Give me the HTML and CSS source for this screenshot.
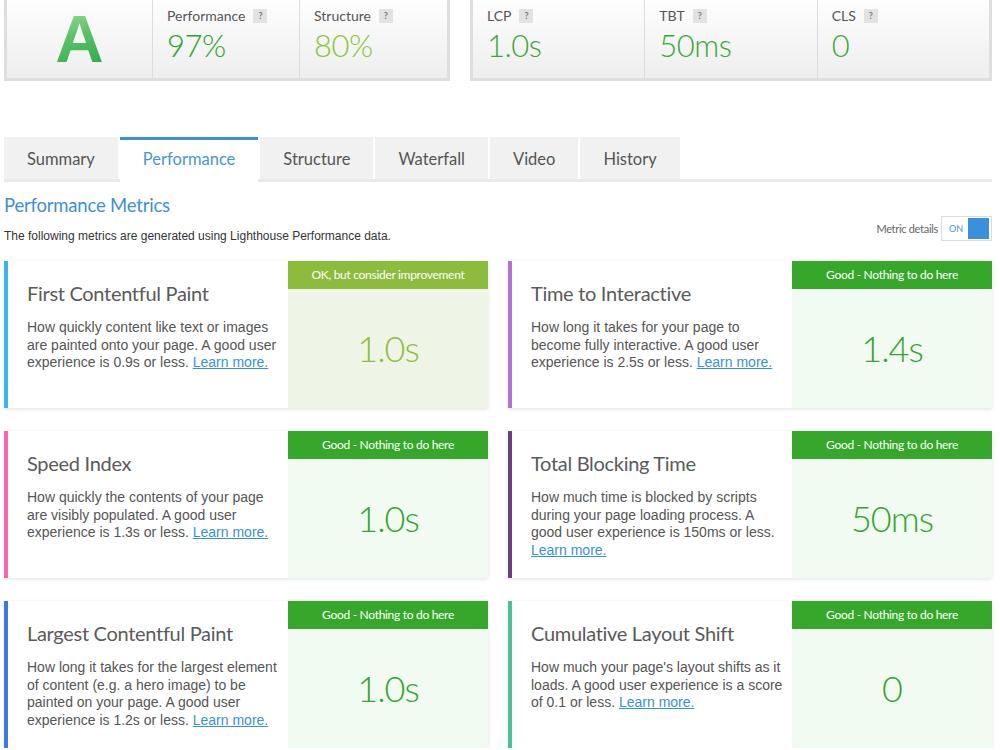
FILE: index.html
```html
<!DOCTYPE html>
<html lang="en">
<head>
<meta charset="utf-8">
<title>Performance Report</title>
<link rel="stylesheet" href="styles.css">
</head>
<body>
<div class="page">
  <div class="scores">
    <div class="panel panel-left">
      <div class="cell cell-grade"><span class="grade">A</span></div>
      <div class="cell">
        <div class="label">Performance <span class="q">?</span></div>
        <div class="value v-dark">97%</div>
      </div>
      <div class="cell">
        <div class="label">Structure <span class="q">?</span></div>
        <div class="value v-light">80%</div>
      </div>
    </div>
    <div class="panel panel-right">
      <div class="cell">
        <div class="label">LCP <span class="q">?</span></div>
        <div class="value v-green">1.0s</div>
      </div>
      <div class="cell">
        <div class="label">TBT <span class="q">?</span></div>
        <div class="value v-green">50ms</div>
      </div>
      <div class="cell">
        <div class="label">CLS <span class="q">?</span></div>
        <div class="value v-green">0</div>
      </div>
    </div>
  </div>

  <nav class="tabs">
    <div class="tab">Summary</div>
    <div class="tab active">Performance</div>
    <div class="tab">Structure</div>
    <div class="tab">Waterfall</div>
    <div class="tab">Video</div>
    <div class="tab">History</div>
  </nav>

  <h2 class="section-title">Performance Metrics</h2>
  <div class="intro-row">
    <p class="intro">The following metrics are generated using Lighthouse Performance data.</p>
    <div class="toggle-wrap">
      <span class="toggle-label">Metric details</span>
      <span class="toggle"><span class="toggle-on">ON</span><span class="toggle-knob"></span></span>
    </div>
  </div>

  <div class="metrics">
    <div class="card c-fcp">
      <div class="card-body">
        <h3 class="card-title">First Contentful Paint</h3>
        <p class="card-desc">How quickly content like text or images are painted onto your page. A good user experience is 0.9s or less. <a href="#">Learn more.</a></p>
      </div>
      <div class="card-score ok">
        <div class="score-head">OK, but consider improvement</div>
        <div class="score-val">1.0s</div>
      </div>
    </div>

    <div class="card c-tti">
      <div class="card-body">
        <h3 class="card-title">Time to Interactive</h3>
        <p class="card-desc">How long it takes for your page to become fully interactive. A good user experience is 2.5s or less. <a href="#">Learn more.</a></p>
      </div>
      <div class="card-score good">
        <div class="score-head">Good - Nothing to do here</div>
        <div class="score-val">1.4s</div>
      </div>
    </div>

    <div class="card c-si">
      <div class="card-body">
        <h3 class="card-title">Speed Index</h3>
        <p class="card-desc">How quickly the contents of your page are visibly populated. A good user experience is 1.3s or less. <a href="#">Learn more.</a></p>
      </div>
      <div class="card-score good">
        <div class="score-head">Good - Nothing to do here</div>
        <div class="score-val">1.0s</div>
      </div>
    </div>

    <div class="card c-tbt">
      <div class="card-body">
        <h3 class="card-title">Total Blocking Time</h3>
        <p class="card-desc">How much time is blocked by scripts during your page loading process. A good user experience is 150ms or less. <a href="#">Learn more.</a></p>
      </div>
      <div class="card-score good">
        <div class="score-head">Good - Nothing to do here</div>
        <div class="score-val">50ms</div>
      </div>
    </div>

    <div class="card c-lcp">
      <div class="card-body">
        <h3 class="card-title">Largest Contentful Paint</h3>
        <p class="card-desc">How long it takes for the largest element of content (e.g. a hero image) to be painted on your page. A good user experience is 1.2s or less. <a href="#">Learn more.</a></p>
      </div>
      <div class="card-score good">
        <div class="score-head">Good - Nothing to do here</div>
        <div class="score-val">1.0s</div>
      </div>
    </div>

    <div class="card c-cls">
      <div class="card-body">
        <h3 class="card-title">Cumulative Layout Shift</h3>
        <p class="card-desc">How much your page's layout shifts as it loads. A good user experience is a score of 0.1 or less. <a href="#">Learn more.</a></p>
      </div>
      <div class="card-score good">
        <div class="score-head">Good - Nothing to do here</div>
        <div class="score-val">0</div>
      </div>
    </div>
  </div>
</div>
</body>
</html>
```

FILE: styles.css
```css
* { box-sizing: border-box; }

html, body {
  margin: 0;
  padding: 0;
  background: #fff;
}

body {
  font-family: Lato, "Open Sans", sans-serif;
  color: #555;
  overflow: hidden;
}

.page {
  width: 988px;
  margin-left: 4px;
}

/* ---------- top score panels ---------- */
.scores {
  display: flex;
  gap: 20px;
  margin-top: -10px;
}

.panel {
  display: flex;
  height: 91px;
  border: 3px solid #dedede;
  background: linear-gradient(#ffffff, #eeeeee);
}

.panel-left { width: 446px; }
.panel-right { flex: 1; }

.cell {
  padding: 14px 0 0 14px;
  border-right: 1px solid #dcdcdc;
}
.cell:last-child { border-right: none; }

.panel-left .cell { width: 147px; }
.panel-left .cell-grade { width: 146px; }
.panel-left .cell:last-child { flex: 1; }
.panel-right .cell { flex: 1; }

.cell-grade {
  display: flex;
  justify-content: center;
  align-items: flex-start;
  padding: 8px 0 0 0;
}

.grade {
  display: block;
  font-family: "Liberation Sans", Arial, sans-serif;
  font-weight: 700;
  font-size: 67px;
  line-height: 75px;
  background: linear-gradient(160deg, #b5e3b6 0%, #5cc267 45%, #22a044 100%);
  -webkit-background-clip: text;
  background-clip: text;
  color: transparent;
}

.label {
  font-size: 14px;
  line-height: 18px;
  color: #555;
  display: flex;
  align-items: center;
  gap: 8px;
}

.q {
  display: inline-block;
  width: 14px;
  height: 14px;
  background: #e2e2e2;
  color: #777;
  font-size: 9px;
  font-weight: 700;
  line-height: 14px;
  text-align: center;
}

.value {
  margin-top: 3px;
  font-size: 31px;
  font-weight: 300;
  line-height: 34px;
  letter-spacing: -0.5px;
}
.v-dark { color: #2ea22f; }
.v-light { color: #8cc43f; }
.v-green { color: #39a935; }

/* ---------- tabs ---------- */
.tabs {
  display: flex;
  margin-top: 56px;
  border-bottom: 3px solid #e9e9e9;
}

.tab {
  height: 42px;
  padding: 3px 23px 0;
  margin-right: 2px;
  background: #f1f1f1;
  font-size: 16.5px;
  line-height: 38px;
  color: #555;
}

.tab.active {
  background: #fff;
  color: #4a93d6;
  border-top: 3px solid #3d8fd4;
  padding-top: 0;
  height: 45px;
  margin-bottom: -3px;
}

/* ---------- heading ---------- */
.section-title {
  margin: 11px 0 0;
  font-weight: 400;
  font-size: 18.5px;
  line-height: 24px;
  color: #3f8fd2;
  letter-spacing: -0.2px;
}

.intro-row {
  display: flex;
  justify-content: space-between;
  align-items: flex-start;
  margin-top: -1px;
}

.intro {
  margin: 12px 0 0;
  font-family: "Liberation Sans", Arial, sans-serif;
  font-size: 12px;
  line-height: 16px;
  color: #333;
}

.toggle-wrap {
  display: flex;
  align-items: center;
  gap: 3px;
}

.toggle-label {
  font-size: 11px;
  color: #666;
  letter-spacing: -0.3px;
}

.toggle {
  display: flex;
  align-items: center;
  justify-content: space-between;
  width: 51px;
  height: 25px;
  padding: 2px 2px 2px 7px;
  border: 1px solid #dcdcdc;
  background: #fff;
}

.toggle-on {
  font-size: 9px;
  color: #4a93d6;
}

.toggle-knob {
  width: 21px;
  height: 21px;
  background: #3b8fdc;
}

/* ---------- metric cards ---------- */
.metrics {
  display: grid;
  grid-template-columns: 1fr 1fr;
  column-gap: 20px;
  row-gap: 23px;
  margin-top: 17px;
}

.card {
  display: flex;
  height: 147px;
  background: #fff;
  border-left: 4px solid #ccc;
  box-shadow: 0 1px 4px rgba(0, 0, 0, 0.12);
}

.c-fcp { border-left-color: #3cb3ea; }
.c-tti { border-left-color: #b173cb; }
.c-si  { border-left-color: #ef69a6; }
.c-tbt { border-left-color: #6d3f80; }
.c-lcp { border-left-color: #3d78da; }
.c-cls { border-left-color: #4cbf96; }

.card-body {
  flex: 1;
  padding: 20px 6px 0 19px;
}

.card-title {
  margin: 0;
  font-weight: 400;
  font-size: 20px;
  line-height: 24px;
  color: #5a5a5a;
  letter-spacing: -0.3px;
}

.card-desc {
  margin: 14px 0 0;
  font-family: "Liberation Sans", Arial, sans-serif;
  font-size: 14px;
  line-height: 17.6px;
  color: #555;
}

.card-desc a {
  color: #3a8fd8;
  text-decoration: underline;
}

.card-score {
  width: 200px;
  display: flex;
  flex-direction: column;
}

.score-head {
  height: 28px;
  font-size: 12px;
  line-height: 28px;
  text-align: center;
  color: #fff;
  letter-spacing: -0.3px;
}

.score-val {
  flex: 1;
  display: flex;
  align-items: center;
  justify-content: center;
  font-size: 36px;
  font-weight: 300;
  letter-spacing: -1px;
  padding-bottom: 2px;
}

.ok { background: #eff5e6; }
.ok .score-head { background: #8dbb3e; }
.ok .score-val { color: #8cbd3f; }

.good { background: #f1fbf1; }
.good .score-head { background: #36a72a; }
.good .score-val { color: #35a32d; }
```
